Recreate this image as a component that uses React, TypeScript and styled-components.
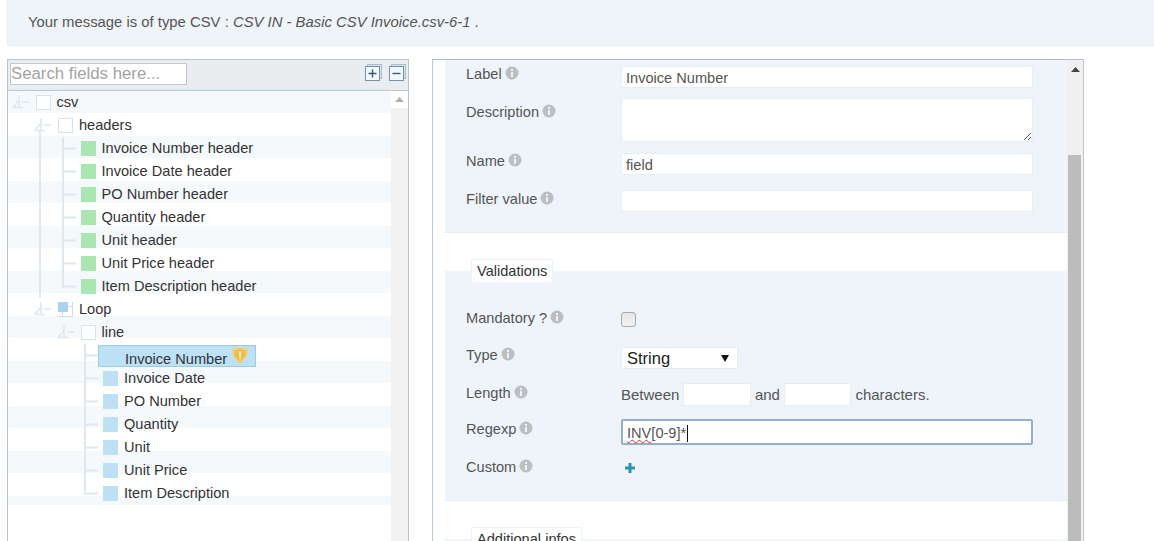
import React from 'react';
import styled, { createGlobalStyle } from 'styled-components';

interface TreeNode {
    label: string;
    kind: 'empty' | 'loop' | 'header' | 'field';
    guides: boolean[];
    branch: 'fold' | 'foldOpen' | 'leaf' | 'last';
    selected?: boolean;
}

const headers = ['Invoice Number header', 'Invoice Date header', 'PO Number header', 'Quantity header', 'Unit header', 'Unit Price header', 'Item Description header'];
const fields = ['Invoice Number', 'Invoice Date', 'PO Number', 'Quantity', 'Unit', 'Unit Price', 'Item Description'];

const nodes: TreeNode[] = [
    { label: 'csv', kind: 'empty', guides: [], branch: 'fold' },
    { label: 'headers', kind: 'empty', guides: [false], branch: 'foldOpen' },
    ...headers.map((label, i): TreeNode => ({ label, kind: 'header', guides: [false, true], branch: i === headers.length - 1 ? 'last' : 'leaf' })),
    { label: 'Loop', kind: 'loop', guides: [false], branch: 'fold' },
    { label: 'line', kind: 'empty', guides: [false, false], branch: 'fold' },
    ...fields.map((label, i): TreeNode => ({ label, kind: 'field', guides: [false, false, false], branch: i === fields.length - 1 ? 'last' : 'leaf', selected: i === 0 })),
];

const LINE = '#dde8f0';

const BranchIcon: React.FC<{ branch: TreeNode['branch'] }> = ({ branch }) => (
    <svg width="24" height="23" viewBox="0 0 24 23" fill="none" stroke={LINE} strokeWidth="2">
        {branch === 'leaf' && <path d="M6 0V23M6 11.5H19" />}
        {branch === 'last' && <path d="M6 0V11.5H19" />}
        {(branch === 'fold' || branch === 'foldOpen') && (
            <path strokeWidth="1.5" d="M7 4V16.500H1L7 9M7 16.500H11M10 11H17" />
        )}
        {branch === 'foldOpen' && <path d="M6 17V23" />}
    </svg>
);

const InfoIcon: React.FC = () => (
    <InfoSvg width="14" height="14" viewBox="0 0 14 14">
        <circle cx="7" cy="7" r="6.500" fill="#bcbec0" />
        <rect x="6" y="6" width="2" height="5" fill="#eef3f9" />
        <rect x="6" y="3" width="2" height="2" fill="#eef3f9" />
    </InfoSvg>
);

const ShieldIcon: React.FC = () => (
    <svg width="18" height="18" viewBox="0 0 18 18">
        <path d="M9 0.500C6.500 2 4 2.500 0.500 2.500C0.500 9 2.500 14.500 9 17.500C15.500 14.500 17.500 9 17.500 2.500C14 2.500 11.500 2 9 0.500Z" fill="#e8d68e" />
        <path d="M9 2.500C7.500 3.500 5.500 4 3 4.200C3 9 5 13 9 15.300C13 13 15 9 15 4.200C12.500 4 10.500 3.500 9 2.500Z" fill="#ecbd4c" />
        <rect x="8" y="5.500" width="2" height="5" fill="#fdf0bd" />
        <rect x="8" y="11.500" width="2" height="1.600" fill="#fdf0bd" />
    </svg>
);

const ToggleIcon: React.FC<{ plus?: boolean }> = ({ plus }) => (
    <svg width="17" height="17" viewBox="0 0 17 17" fill="none">
        <rect x="2.500" y="0.500" width="14" height="14" fill="#d5e2ec" stroke="#a9bfd0" />
        <rect x="0.500" y="2.500" width="14" height="14" fill="#f3f7fa" stroke="#6f93ad" />
        <path d={plus ? 'M3.500 9.500H11.500M7.500 5.500V13.500' : 'M3.500 9.500H11.500'} stroke="#2f5f80" strokeWidth="1.400" />
    </svg>
);

const UpArrow: React.FC = () => (
    <svg width="9" height="5" viewBox="0 0 9 5"><path d="M4.500 0L9 5H0Z" fill="currentColor" /></svg>
);

const Field: React.FC<{ name: string; gap: number; offset?: number; children: React.ReactNode }> = ({ name, gap, offset = 0, children }) => (
    <FormRow $gap={gap}>
        <FieldLabel $offset={offset}>{name}<InfoIcon /></FieldLabel>
        {children}
    </FormRow>
);

export default function App() {
    return (
        <>
            <GlobalStyle />
            <Page>
                <Banner>
                    Your message is of type CSV : <em>CSV IN - Basic CSV Invoice.csv-6-1</em> .
                </Banner>
                <Columns>
                    <TreePanel>
                        <TreeHeader>
                            <SearchInput placeholder="Search fields here..." />
                            <ToggleGroup>
                                <ToggleIcon plus />
                                <ToggleIcon />
                            </ToggleGroup>
                        </TreeHeader>
                        <TreeBody>
                            <TreeList>
                                {nodes.map((node) => (
                                    <TreeRow key={node.label}>
                                        {node.guides.map((on, i) => (
                                            <Guide key={i} $on={on} />
                                        ))}
                                        <BranchCell>
                                            <BranchIcon branch={node.branch} />
                                        </BranchCell>
                                        <NodeLabel $selected={node.selected}>
                                            <NodeBox $kind={node.kind} />
                                            <NodeText $selected={node.selected}>{node.label}</NodeText>
                                            {node.selected && <ShieldSlot><ShieldIcon /></ShieldSlot>}
                                        </NodeLabel>
                                    </TreeRow>
                                ))}
                            </TreeList>
                            <TreeScrollbar>
                                <ScrollButton><UpArrow /></ScrollButton>
                            </TreeScrollbar>
                        </TreeBody>
                    </TreePanel>

                    <FormPanel>
                        <FormContent>
                            <Section>
                                <Field name="Label" gap={6}>
                                    <TextInput defaultValue="Invoice Number" />
                                </Field>
                                <Field name="Description" gap={10} offset={6}>
                                    <TextArea />
                                </Field>
                                <Field name="Name" gap={11}>
                                    <TextInput defaultValue="field" />
                                </Field>
                                <Field name="Filter value" gap={15} offset={1}>
                                    <TextInput />
                                </Field>
                                <SectionEnd $height={20} />
                            </Section>

                            <Section $spaced>
                                <Legend>Validations</Legend>
                                <Field name="Mandatory ?" gap={29} offset={-2}>
                                    <CheckBox type="checkbox" />
                                </Field>
                                <Field name="Type" gap={20}>
                                    <SelectBox>
                                        String
                                        <svg width="8" height="8" viewBox="0 0 8 8"><path d="M0 1H8L4 8Z" fill="#111" /></svg>
                                    </SelectBox>
                                </Field>
                                <Field name="Length" gap={14} offset={2}>
                                    <LengthGroup>
                                        <span>Between</span>
                                        <ShortInput />
                                        <span>and</span>
                                        <ShortInput />
                                        <span>characters.</span>
                                    </LengthGroup>
                                </Field>
                                <Field name="Regexp" gap={13} offset={2}>
                                    <RegexpBox>
                                        <Misspelt>INV</Misspelt>[0-9]*<Caret />
                                    </RegexpBox>
                                </Field>
                                <Field name="Custom" gap={15} offset={-1}>
                                    <AddButton>
                                        <svg width="10" height="10" viewBox="0 0 10 10"><path d="M5 0V10M0 5H10" stroke="#2b93ad" strokeWidth="3" /></svg>
                                    </AddButton>
                                </Field>
                                <SectionEnd $height={24} />
                            </Section>

                            <Section $spaced>
                                <Legend>Additional infos</Legend>
                            </Section>
                        </FormContent>
                        <FormScrollbar>
                            <ScrollButton $dark><UpArrow /></ScrollButton>
                            <ScrollGap />
                            <ScrollThumb />
                        </FormScrollbar>
                    </FormPanel>
                </Columns>
            </Page>
        </>
    );
}

const GlobalStyle = createGlobalStyle`
    html, body {
        margin: 0;
        height: 541px;
        overflow: hidden;
        background: #fff;
    }
    * {
        box-sizing: border-box;
    }
`;

const Page = styled.div`
    width: 1154px;
    height: 541px;
    overflow: hidden;
    font-family: "Liberation Sans", Arial, sans-serif;
    font-size: 14.6px;
    color: #555;
`;

const Banner = styled.div`
    height: 46px;
    margin-left: 7px;
    padding: 14px 20px 0;
    font-size: 14.85px;
    line-height: 17px;
    background: #eff4f9;
    border-bottom: 1px solid #e6edf3;
    border-left: 1px solid #e6edf3;
`;

const Columns = styled.div`
    display: flex;
    align-items: flex-start;
    margin-top: 13px;
    padding-left: 7px;
`;

const TreePanel = styled.div`
    width: 402px;
    height: 490px;
    border: 1px solid #b5c6d2;
`;

const TreeHeader = styled.div`
    height: 31px;
    padding: 3px 0 0 2px;
    display: flex;
    justify-content: space-between;
    background: #e9edf0;
    border-bottom: 1px solid #b5c9d8;
`;

const SearchInput = styled.input`
    width: 177px;
    height: 22px;
    padding: 0;
    font-family: inherit;
    font-size: 16.800px;
    background: #fff;
    border: 1px solid #c4c9cd;
    outline: none;

    &::placeholder {
        color: #a3a3a3;
        opacity: 1;
    }
`;

const ToggleGroup = styled.div`
    display: flex;
    gap: 7px;
    padding: 1px 2px 0 0;
`;

const TreeBody = styled.div`
    display: flex;
    height: 460px;
`;

const TreeList = styled.div`
    flex: 1;
    align-self: flex-start;
    height: 414px;
    background: repeating-linear-gradient(to bottom, #f6f9fc 0, #f6f9fc 22px, #fff 22px, #fff 45px);
`;

const TreeRow = styled.div`
    display: flex;
    align-items: center;
    height: 23px;
    padding-left: 3.500px;
    color: #333;
`;

const Guide = styled.div<{ $on: boolean }>`
    flex: none;
    width: 22.500px;
    height: 23px;
    background: ${(p) => (p.$on ? `linear-gradient(${LINE}, ${LINE}) 5px 0 / 2px 100% no-repeat` : 'none')};
`;

const BranchCell = styled.div`
    flex: none;
    width: 24px;
    height: 23px;

    svg {
        display: block;
    }
`;

const NodeLabel = styled.div<{ $selected?: boolean }>`
    display: flex;
    align-items: center;
    height: ${(p) => (p.$selected ? '22px' : '23px')};
    margin-left: -5px;
    padding: 0 6px 0 5px;
    border: 1px solid ${(p) => (p.$selected ? '#9ccbe6' : 'transparent')};
    border-width: ${(p) => (p.$selected ? '1px' : '0')};
    margin-top: ${(p) => (p.$selected ? '1px' : '0')};
    background: ${(p) => (p.$selected ? '#bde1f7' : 'transparent')};
`;

const boxColours = { empty: '#fff', loop: '#fff', header: '#a9e6b1', field: '#bde0f5' };

const NodeBox = styled.span<{ $kind: TreeNode['kind'] }>`
    flex: none;
    width: 15px;
    height: 15px;
    margin-right: 6px;
    background: ${(p) => boxColours[p.$kind]};
    border: ${(p) => (p.$kind === 'empty' ? '1px solid #d8e3ea' : 'none')};
    ${(p) => p.$kind === 'loop' && `
        background:
            linear-gradient(#a9d3ee, #a9d3ee) 0 0 / 10px 10px no-repeat,
            linear-gradient(#cfdce5, #cfdce5) 10px 4px / 5px 1px no-repeat,
            linear-gradient(#cfdce5, #cfdce5) 4px 10px / 1px 5px no-repeat,
            #fff;
        border-right: 1px solid #cfdce5;
        border-bottom: 1px solid #cfdce5;
    `}
`;

const NodeText = styled.span<{ $selected?: boolean }>`
    line-height: 17px;
    white-space: nowrap;
    margin-top: ${(p) => (p.$selected ? '6px' : '0')};
`;

const ShieldSlot = styled.span`
    display: flex;
    margin-left: 4px;
    margin-top: -3px;
`;

const TreeScrollbar = styled.div`
    flex: none;
    width: 17px;
    background: #f1f1f1;
`;

const ScrollButton = styled.div<{ $dark?: boolean }>`
    display: flex;
    justify-content: center;
    align-items: center;
    height: ${(p) => (p.$dark ? '18px' : '17px')};
    color: ${(p) => (p.$dark ? '#444' : '#b0b0b0')};
    background: ${(p) => (p.$dark ? 'transparent' : '#fff')};
`;

const FormPanel = styled.div`
    display: flex;
    width: 652px;
    height: 490px;
    margin-left: 23px;
    border: 1px solid #b5c9d8;
    border-top-color: #b3bcc4;
`;

const FormContent = styled.div`
    flex: 1;
    padding-left: 12px;
    overflow: hidden;
`;

const Section = styled.div<{ $spaced?: boolean }>`
    display: flow-root;
    margin-top: ${(p) => (p.$spaced ? '38px' : '0')};
    background: #eef4f9;
    border-bottom: 1px solid #e6edf3;
`;

const SectionEnd = styled.div<{ $height: number }>`
    height: ${(p) => p.$height}px;
`;

const Legend = styled.div`
    width: fit-content;
    height: 24px;
    margin: -12px 0 0 26px;
    padding: 0 5px;
    line-height: 22px;
    color: #333;
    background: #fff;
    border: 1px solid #f0f3f6;
`;

const FormRow = styled.div<{ $gap: number }>`
    display: flex;
    align-items: flex-start;
    margin-top: ${(p) => p.$gap}px;
    padding-left: 21px;
`;

const FieldLabel = styled.div<{ $offset: number }>`
    display: flex;
    align-items: flex-start;
    flex: none;
    gap: 3px;
    width: 155px;
    margin-top: ${(p) => p.$offset}px;
    line-height: 16px;
`;

const InfoSvg = styled.svg`
    flex: none;
`;

const controlBase = `
    display: block;
    width: 412px;
    font-family: inherit;
    font-size: 14.6px;
    color: #555;
    background: #fff;
    border: 1px solid #e6edf3;
    outline: none;
`;

const TextInput = styled.input`
    ${controlBase}
    height: 22px;
    padding: 2px 4px 0;
`;

const TextArea = styled.textarea`
    ${controlBase}
    height: 44px;
    padding: 2px 4px;
    resize: vertical;
`;

const CheckBox = styled.input`
    appearance: none;
    display: block;
    width: 15px;
    height: 15px;
    margin: 0;
    background: linear-gradient(#e6e6e6, #f2f2f2);
    border: 1px solid #a8a8a8;
    border-radius: 3px;
`;

const SelectBox = styled.div`
    display: flex;
    align-items: center;
    justify-content: space-between;
    width: 117px;
    height: 22px;
    padding: 0 8px 0 5px;
    font-size: 16.500px;
    color: #222;
    background: #fff;
    border: 1px solid #e6edf3;
`;

const LengthGroup = styled.div`
    display: flex;
    align-items: center;
    gap: 4px;
    height: 23px;
    font-size: 15px;
    white-space: nowrap;
`;

const ShortInput = styled.input`
    width: 67.500px;
    height: 23px;
    background: #fff;
    border: 1px solid #e6edf3;
    outline: none;
`;

const RegexpBox = styled.div`
    ${controlBase}
    display: flex;
    align-items: center;
    height: 26px;
    padding: 2px 4px 0;
    border: 2px solid #8fb0cf;
    border-radius: 2px;
`;

const Misspelt = styled.span`
    text-decoration: underline wavy #e03020 1px;
`;

const Caret = styled.span`
    display: inline-block;
    width: 1px;
    height: 17px;
    margin-left: 1px;
    background: #111;
`;

const AddButton = styled.div`
    display: flex;
    align-items: center;
    height: 16px;
    padding-left: 4px;
`;

const FormScrollbar = styled.div`
    flex: none;
    display: flex;
    flex-direction: column;
    width: 16px;
    background: #f0f0f0;
`;

const ScrollGap = styled.div`
    height: 77px;
`;

const ScrollThumb = styled.div`
    flex: 1;
    margin: 0 2px 0 1px;
    background: #bcbcbc;
`;
